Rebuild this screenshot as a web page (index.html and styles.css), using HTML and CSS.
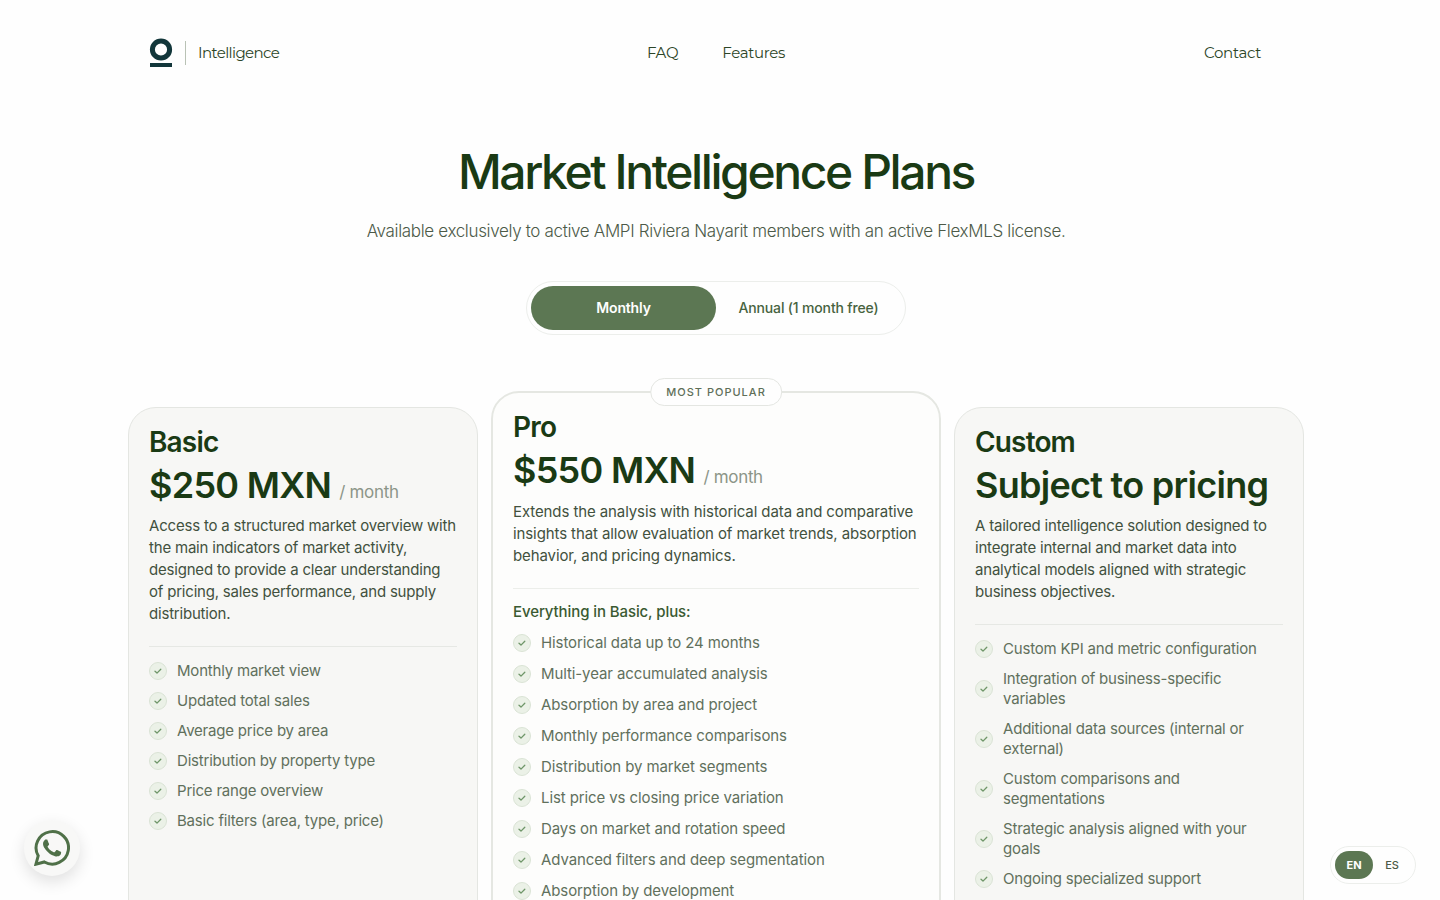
FILE: index.html
```html
<!DOCTYPE html>
<html lang="en">
	<head>
		<meta charset="UTF-8" />
		<meta name="viewport" content="width=device-width, initial-scale=1.0" />
		<title>Market Intelligence Plans</title>
		<link rel="stylesheet" href="styles.css">
	</head>
	<body>
		<svg class="sprite" aria-hidden="true">
			<symbol id="check" viewBox="0 0 18 18">
				<circle cx="9" cy="9" r="8.5" fill="#ebf1e7" stroke="#dae3d5" />
				<path d="M6 9.3l2 1.8 3.8-3.9" fill="none" stroke="#6f9669" stroke-width="1.3" stroke-linecap="round" stroke-linejoin="round" />
			</symbol>
		</svg>
		<header class="header">
			<a href="#" class="brand">
				<svg class="logo" viewBox="0 0 24 30" aria-hidden="true">
					<circle cx="12" cy="11.5" r="8.6" fill="none" stroke="#12363a" stroke-width="5" />
					<rect x="1" y="25" width="22" height="4" fill="#12363a" />
				</svg>
				<span class="brand-name">Intelligence</span>
			</a>
			<nav class="nav">
				<a href="#faq">FAQ</a>
				<a href="#features">Features</a>
			</nav>
			<a href="#contact" class="contact">Contact</a>
		</header>
		<main>
			<section class="hero">
				<h1>Market Intelligence Plans</h1>
				<p>Available exclusively to active AMPI Riviera Nayarit members with an active FlexMLS license.</p>
				<div class="billing">
					<button type="button" class="active">Monthly</button>
					<button type="button">Annual (1 month free)</button>
				</div>
			</section>
			<section class="plans">
				<article class="card">
					<h2>Basic</h2>
					<div class="price">$250 MXN <span>/ month</span></div>
					<p class="desc">Access to a structured market overview with the main indicators of market activity, designed to provide a clear understanding of pricing, sales performance, and supply distribution.</p>
					<ul class="features">
						<li><svg><use href="#check" /></svg>Monthly market view</li>
						<li><svg><use href="#check" /></svg>Updated total sales</li>
						<li><svg><use href="#check" /></svg>Average price by area</li>
						<li><svg><use href="#check" /></svg>Distribution by property type</li>
						<li><svg><use href="#check" /></svg>Price range overview</li>
						<li><svg><use href="#check" /></svg>Basic filters (area, type, price)</li>
					</ul>
				</article>
				<article class="card pro">
					<div class="badge">MOST POPULAR</div>
					<h2>Pro</h2>
					<div class="price">$550 MXN <span>/ month</span></div>
					<p class="desc">Extends the analysis with historical data and comparative insights that allow evaluation of market trends, absorption behavior, and pricing dynamics.</p>
					<h3>Everything in Basic, plus:</h3>
					<ul class="features">
						<li><svg><use href="#check" /></svg>Historical data up to 24 months</li>
						<li><svg><use href="#check" /></svg>Multi-year accumulated analysis</li>
						<li><svg><use href="#check" /></svg>Absorption by area and project</li>
						<li><svg><use href="#check" /></svg>Monthly performance comparisons</li>
						<li><svg><use href="#check" /></svg>Distribution by market segments</li>
						<li><svg><use href="#check" /></svg>List price vs closing price variation</li>
						<li><svg><use href="#check" /></svg>Days on market and rotation speed</li>
						<li><svg><use href="#check" /></svg>Advanced filters and deep segmentation</li>
						<li><svg><use href="#check" /></svg>Absorption by development</li>
					</ul>
				</article>
				<article class="card">
					<h2>Custom</h2>
					<div class="price">Subject to pricing</div>
					<p class="desc">A tailored intelligence solution designed to integrate internal and market data into analytical models aligned with strategic business objectives.</p>
					<ul class="features">
						<li><svg><use href="#check" /></svg>Custom KPI and metric configuration</li>
						<li><svg><use href="#check" /></svg>Integration of business-specific variables</li>
						<li><svg><use href="#check" /></svg>Additional data sources (internal or external)</li>
						<li><svg><use href="#check" /></svg>Custom comparisons and segmentations</li>
						<li><svg><use href="#check" /></svg>Strategic analysis aligned with your goals</li>
						<li><svg><use href="#check" /></svg>Ongoing specialized support</li>
					</ul>
				</article>
			</section>
		</main>
		<a href="#whatsapp" class="whatsapp" aria-label="WhatsApp">
			<svg viewBox="0 0 24 24" aria-hidden="true">
				<path d="M1.3 22.8l1.5-5.6a10.8 10.8 0 1 1 4.1 4.1z" fill="none" stroke="#4f7048" stroke-width="2" />
				<path fill="#4f7048" d="M17.472 14.382c-.297-.149-1.758-.867-2.03-.967-.273-.099-.471-.148-.67.15-.197.297-.767.966-.94 1.164-.173.199-.347.223-.644.075-.297-.15-1.255-.463-2.39-1.475-.883-.788-1.48-1.761-1.653-2.059-.173-.297-.018-.458.13-.606.134-.133.298-.347.446-.52.149-.174.198-.298.298-.497.099-.198.05-.371-.025-.52-.075-.149-.669-1.612-.916-2.207-.242-.579-.487-.5-.669-.51-.173-.008-.371-.01-.57-.01-.198 0-.52.074-.792.372-.272.297-1.04 1.016-1.04 2.479 0 1.462 1.065 2.875 1.213 3.074.149.198 2.096 3.2 5.077 4.487.709.306 1.262.489 1.694.625.712.227 1.36.195 1.871.118.571-.085 1.758-.719 2.006-1.413.248-.694.248-1.289.173-1.413-.074-.124-.272-.198-.57-.347" />
			</svg>
		</a>
		<div class="lang">
			<button type="button" class="active">EN</button>
			<button type="button">ES</button>
		</div>
	</body>
</html>
```
FILE: styles.css
```css
* {
	box-sizing: border-box;
}
body {
	margin: 0;
	padding-right: 8px;
	background-color: #fefefe;
	color: #1a3a14;
	font-family: Inter, sans-serif;
}
h1, h2, h3, p, ul {
	margin: 0;
	padding: 0;
}
a {
	color: inherit;
	text-decoration: none;
}
button {
	border: 0;
	background: none;
	font-family: inherit;
	letter-spacing: inherit;
	cursor: pointer;
}
.sprite {
	display: none;
}
.header {
	display: grid;
	grid-template-columns: 1fr auto 1fr;
	align-items: center;
	max-width: 1176px;
	height: 106px;
	margin: 0 auto;
	padding: 0 21px;
	color: #2c4527;
	font-family: Montserrat, "Open Sans", sans-serif;
	font-size: 15px;
	font-weight: 400;
	line-height: 24px;
	letter-spacing: -0.02em;
}
.brand {
	display: flex;
	align-items: center;
}
.logo {
	width: 24px;
	height: 30px;
}
.brand-name {
	margin-left: 12px;
	padding-left: 12px;
	border-left: 1px solid #b9c2b5;
	letter-spacing: -0.04em;
}
.nav {
	display: flex;
	gap: 44px;
}
.contact {
	justify-self: end;
	margin-right: 22px;
}
.hero {
	display: flex;
	flex-direction: column;
	align-items: center;
	padding-top: 36px;
	text-align: center;
}
.hero h1 {
	font-size: 48px;
	font-weight: 500;
	line-height: 60px;
	letter-spacing: -0.05em;
}
.hero p {
	margin-top: 16px;
	color: #4c5a48;
	font-size: 17px;
	font-weight: 300;
	line-height: 26px;
	letter-spacing: -0.02em;
}
.billing {
	display: grid;
	grid-template-columns: 1fr 1fr;
	width: 380px;
	margin-top: 37px;
	padding: 4px;
	border: 1px solid #eceeeb;
	border-radius: 27px;
	letter-spacing: -0.01em;
}
.billing button {
	height: 44px;
	border-radius: 22px;
	color: #47633f;
	font-size: 14px;
	font-weight: 500;
	line-height: 16px;
}
.billing .active {
	background-color: #5c7753;
	color: #fff;
	font-weight: 600;
}
.plans {
	display: grid;
	grid-template-columns: minmax(0, 7fr) minmax(0, 9fr) minmax(0, 7fr);
	gap: 13px;
	max-width: 1176px;
	margin: 72px auto 0;
	padding-bottom: 60px;
}
.card {
	padding: 16px 20px 40px;
	border: 1px solid #e4e6e2;
	border-radius: 28px;
	background-color: #f7f7f5;
	letter-spacing: -0.2px;
}
.card h2 {
	font-size: 28px;
	font-weight: 600;
	line-height: 36px;
	letter-spacing: -0.03em;
}
.price {
	font-size: 36px;
	font-weight: 600;
	line-height: 50px;
	letter-spacing: -0.02em;
	white-space: nowrap;
}
.price span {
	color: #8c9588;
	font-size: 17px;
	font-weight: 400;
	line-height: 1;
	letter-spacing: -0.02em;
}
.desc {
	margin-top: 5px;
	padding-bottom: 21px;
	border-bottom: 1px solid #e6e8e4;
	color: #42513e;
	font-size: 15px;
	line-height: 22px;
}
.features {
	display: flex;
	flex-direction: column;
	gap: 10px;
	margin-top: 14px;
	list-style: none;
}
.features li {
	display: flex;
	align-items: center;
	gap: 10px;
	color: #61705c;
	font-size: 15px;
	line-height: 20px;
}
.features svg {
	flex: none;
	width: 18px;
	height: 18px;
}
.pro {
	position: relative;
	margin-top: -16px;
	border: 2px solid #e5e7e2;
	background-color: #fdfdfc;
	letter-spacing: -0.1px;
}
.pro .desc {
	margin-top: 6px;
	border-color: #eceeea;
}
.pro .features {
	gap: 11px;
	margin-top: 10px;
}
.pro h3 {
	margin-top: 12px;
	color: #3a5a32;
	font-size: 15px;
	font-weight: 500;
	line-height: 22px;
}
.badge {
	position: absolute;
	top: -15px;
	left: 50%;
	padding: 0 15px;
	border: 1px solid #e4e6e2;
	border-radius: 14px;
	background-color: #fefefe;
	color: #5f6f59;
	font-size: 11px;
	font-weight: 500;
	line-height: 26px;
	letter-spacing: 1px;
	white-space: nowrap;
	transform: translateX(-50%);
}
.whatsapp {
	position: fixed;
	bottom: 24px;
	left: 24px;
	display: flex;
	align-items: center;
	justify-content: center;
	width: 56px;
	height: 56px;
	border-radius: 50%;
	background-color: #f8f8f7;
	box-shadow: 0 6px 16px rgba(0, 0, 0, 0.12);
}
.whatsapp svg {
	width: 36px;
	height: 36px;
}
.lang {
	position: fixed;
	right: 24px;
	bottom: 16px;
	display: flex;
	padding: 4px;
	border: 1px solid #eceeeb;
	border-radius: 19px;
	background-color: #fefefe;
}
.lang button {
	width: 38px;
	height: 28px;
	padding: 0;
	border-radius: 14px;
	color: #4c5a48;
	font-size: 11px;
	font-weight: 500;
}
.lang .active {
	background-color: #5c7753;
	color: #fff;
	font-weight: 700;
}
```
